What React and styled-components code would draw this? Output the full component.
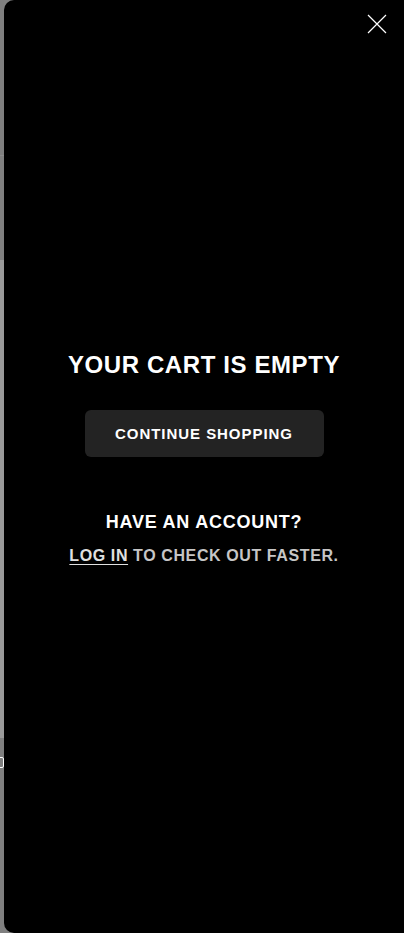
import React from "react";
import styled, { createGlobalStyle } from "styled-components";

const GlobalStyle = createGlobalStyle`
  html, body {
    margin: 0;
    padding: 0;
    height: 100%;
    background: #808080;
    font-family: "Liberation Sans", Arial, sans-serif;
  }
  #root {
    height: 100%;
  }
`;

const segments = [
  { h: 155, bg: "#7f7f7f" },
  { h: 1, bg: "#8c8c8c" },
  { h: 104, bg: "#808080" },
  { h: 478, bg: "#9a9a9a" },
  { h: 195, bg: "#808080" },
];

export default function App() {
  return (
    <>
      <GlobalStyle />
      <Screen>
        <PageEdge>
          {segments.map((s, i) => (
            <EdgeBlock key={i} $h={s.h} $bg={s.bg} />
          ))}
          <EdgeMark />
        </PageEdge>
        <Drawer>
          <CloseButton aria-label="Close">
            <svg width="20" height="20" viewBox="0 0 20 20">
              <path d="M1 1 L19 19 M19 1 L1 19" stroke="#fff" strokeWidth="1.2" />
            </svg>
          </CloseButton>
          <Body>
            <Title>YOUR CART IS EMPTY</Title>
            <ShopButton>CONTINUE SHOPPING</ShopButton>
            <Account>
              <AccountTitle>HAVE AN ACCOUNT?</AccountTitle>
              <AccountText>
                <LoginLink href="#">LOG IN</LoginLink> TO CHECK OUT FASTER.
              </AccountText>
            </Account>
          </Body>
        </Drawer>
      </Screen>
    </>
  );
}

// Style

const Screen = styled.div`
  display: flex;
  height: 933px;
  overflow: hidden;
`;

const PageEdge = styled.div`
  position: relative;
  width: 4px;
  display: flex;
  flex-direction: column;
`;

const EdgeBlock = styled.div`
  height: ${(p) => p.$h}px;
  background: ${(p) => p.$bg};
  flex-shrink: 0;
`;

const EdgeMark = styled.div`
  position: absolute;
  top: 757px;
  left: -4px;
  width: 6px;
  height: 9px;
  border: 1px solid #fff;
  border-radius: 2px;
`;

const Drawer = styled.div`
  position: relative;
  flex: 1;
  background: #000;
  border-radius: 10px 0 0 10px;
  display: flex;
  flex-direction: column;
  justify-content: center;
`;

const CloseButton = styled.button`
  position: absolute;
  top: 14px;
  right: 17px;
  padding: 0;
  border: none;
  background: none;
  display: flex;
  cursor: pointer;
`;

const Body = styled.div`
  display: flex;
  flex-direction: column;
  align-items: center;
  padding-bottom: 17px;
  color: #fff;
  text-align: center;
`;

const Title = styled.h2`
  margin: 0;
  font-size: 24px;
  line-height: 30px;
  font-weight: 700;
  letter-spacing: 0.6px;
`;

const ShopButton = styled.button`
  margin-top: 30px;
  width: 239px;
  height: 47px;
  border: none;
  border-radius: 6px;
  background: #232323;
  color: #fff;
  font-family: inherit;
  font-size: 15px;
  font-weight: 700;
  letter-spacing: 0.95px;
  cursor: pointer;
`;

const Account = styled.div`
  margin-top: 54px;
  display: flex;
  flex-direction: column;
  align-items: center;
  gap: 13px;
`;

const AccountTitle = styled.h3`
  margin: 0;
  font-size: 18px;
  line-height: 22px;
  font-weight: 700;
  letter-spacing: 0.75px;
`;

const AccountText = styled.p`
  margin: 0;
  font-size: 16px;
  line-height: 20px;
  font-weight: 700;
  color: #c6c6c6;
  letter-spacing: 0.6px;
`;

const LoginLink = styled.a`
  color: #e0e0e0;
  text-decoration: underline;
  text-underline-offset: 3px;
`;
